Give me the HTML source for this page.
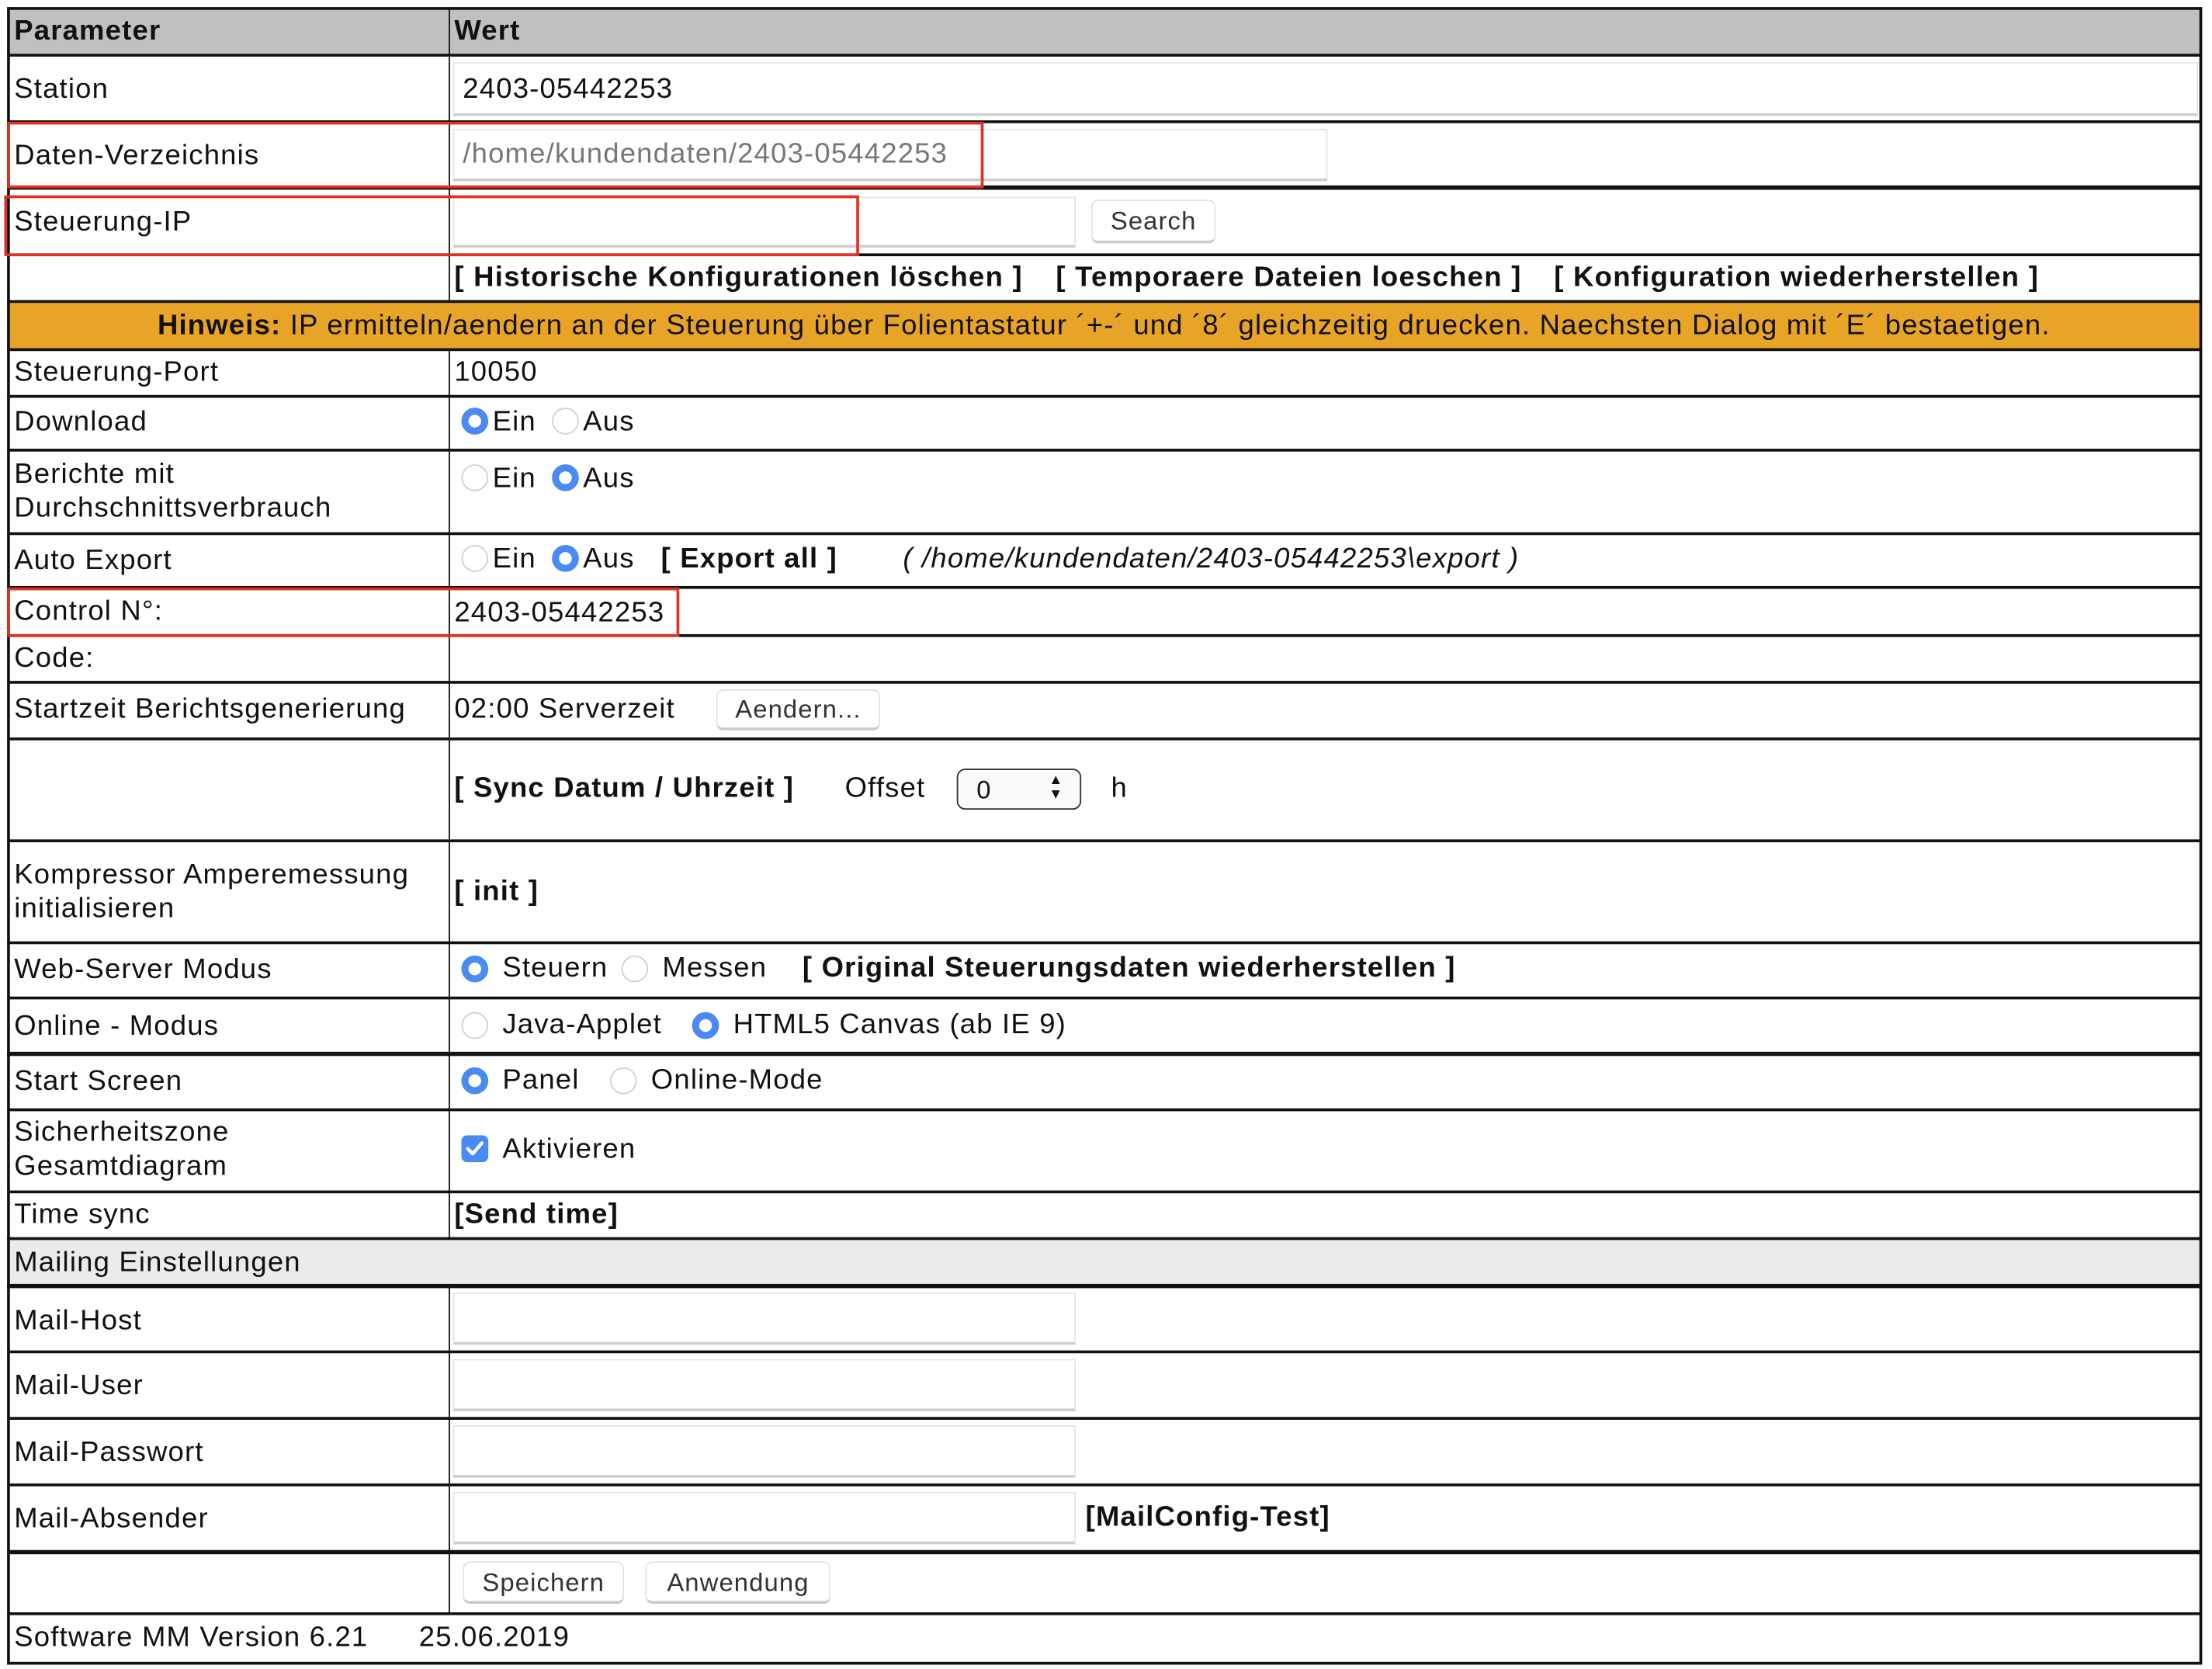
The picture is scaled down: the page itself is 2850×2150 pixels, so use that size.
<!DOCTYPE html>
<html><head><meta charset="utf-8">
<style>
html,body{margin:0;padding:0;background:#fff;width:2850px;height:2150px;overflow:hidden}
#w{position:absolute;left:0;top:0;width:1563px;height:1179px;transform:scale(1.8235);transform-origin:0 0}
.t{position:absolute;font:20px "Liberation Sans",Arial,sans-serif;color:#111;white-space:nowrap;line-height:24px;letter-spacing:0.65px}
.b{font-weight:bold}
.h{position:absolute;background:#111;left:5px;width:1550px}
.v{position:absolute;background:#111;width:1.5px}
.inp{position:absolute;background:#fff;border:1px solid #e6e6e6;border-bottom:2px solid #cfcfcf;box-sizing:border-box}
.btn{position:absolute;background:#fff;border:1px solid #e2e2e2;border-bottom:2px solid #ccc;border-radius:5px;box-sizing:border-box;font:18px "Liberation Sans",Arial,sans-serif;color:#333;text-align:center;letter-spacing:0.6px}
.r{position:absolute;width:19px;height:19px;border-radius:50%;box-sizing:border-box;border:1.5px solid #d0d0d0;background:#fff}
.rs{border:5.5px solid #4a8af4}
.red{position:absolute;border:2.5px solid #e0301e;box-sizing:border-box}
</style></head><body><div id="w">
<div style="position:absolute;left:5px;top:5px;width:1550px;height:34px;background:#c0c0c0"></div>
<div style="position:absolute;left:5px;top:213px;width:1550px;height:34px;background:#e8a427"></div>
<div style="position:absolute;left:5px;top:875px;width:1550px;height:33px;background:#ebebeb"></div>

<div class="h" style="top:5px;height:2px"></div>
<div class="h" style="top:38px;height:2px"></div>
<div class="h" style="top:85px;height:1.5px"></div>
<div class="h" style="top:132px;height:1.5px"></div>
<div style="position:absolute;left:694px;top:131px;width:861px;height:3px;background:#111"></div>
<div class="h" style="top:179px;height:1.5px"></div>
<div class="h" style="top:212px;height:1.5px"></div>
<div class="h" style="top:246px;height:1.5px"></div>
<div class="h" style="top:279px;height:1.5px"></div>
<div class="h" style="top:317px;height:1.5px"></div>
<div class="h" style="top:376px;height:1.5px"></div>
<div class="h" style="top:414px;height:1.5px"></div>
<div class="h" style="top:448px;height:1.5px"></div>
<div class="h" style="top:481px;height:1.5px"></div>
<div class="h" style="top:521px;height:1.5px"></div>
<div class="h" style="top:593px;height:1.5px"></div>
<div class="h" style="top:665px;height:1.5px"></div>
<div class="h" style="top:704px;height:1.5px"></div>
<div class="h" style="top:743px;height:2.5px"></div>
<div class="h" style="top:783px;height:1.5px"></div>
<div class="h" style="top:841px;height:1.5px"></div>
<div class="h" style="top:874px;height:1.5px"></div>
<div class="h" style="top:907px;height:2.5px"></div>
<div class="h" style="top:954px;height:1.5px"></div>
<div class="h" style="top:1001px;height:1.5px"></div>
<div class="h" style="top:1048px;height:1.5px"></div>
<div class="h" style="top:1095px;height:2.5px"></div>
<div class="h" style="top:1139px;height:1.5px"></div>
<div class="h" style="top:1174px;height:1.5px"></div>

<div class="v" style="left:5px;top:5px;height:1171px"></div>
<div class="v" style="left:1554px;top:5px;height:1171px"></div>
<div class="v" style="left:316.5px;top:5px;height:208px"></div>
<div class="v" style="left:316.5px;top:247px;height:628px"></div>
<div class="v" style="left:316.5px;top:908px;height:232px"></div>

<div class="t b" style="left:10px;top:10px">Parameter</div>
<div class="t b" style="left:321px;top:10px">Wert</div>

<div class="t" style="left:10px;top:51px">Station</div>
<div class="t" style="left:10px;top:98px">Daten-Verzeichnis</div>
<div class="t" style="left:10px;top:145px">Steuerung-IP</div>
<div class="t" style="left:10px;top:251px">Steuerung-Port</div>
<div class="t" style="left:10px;top:286px">Download</div>
<div class="t" style="left:10px;top:323px">Berichte mit</div>
<div class="t" style="left:10px;top:347px">Durchschnittsverbrauch</div>
<div class="t" style="left:10px;top:384px">Auto Export</div>
<div class="t" style="left:10px;top:420px">Control N°:</div>
<div class="t" style="left:10px;top:453px">Code:</div>
<div class="t" style="left:10px;top:489px">Startzeit Berichtsgenerierung</div>
<div class="t" style="left:10px;top:606px">Kompressor Amperemessung</div>
<div class="t" style="left:10px;top:630px">initialisieren</div>
<div class="t" style="left:10px;top:673px">Web-Server Modus</div>
<div class="t" style="left:10px;top:713px">Online - Modus</div>
<div class="t" style="left:10px;top:752px">Start Screen</div>
<div class="t" style="left:10px;top:788px">Sicherheitszone</div>
<div class="t" style="left:10px;top:812px">Gesamtdiagram</div>
<div class="t" style="left:10px;top:846px">Time sync</div>
<div class="t" style="left:10px;top:880px">Mailing Einstellungen</div>
<div class="t" style="left:10px;top:921px">Mail-Host</div>
<div class="t" style="left:10px;top:967px">Mail-User</div>
<div class="t" style="left:10px;top:1014px">Mail-Passwort</div>
<div class="t" style="left:10px;top:1061px">Mail-Absender</div>
<div class="t" style="left:10px;top:1145px">Software MM Version 6.21</div>
<div class="t" style="left:296px;top:1145px">25.06.2019</div>

<div class="inp" style="left:320px;top:44px;width:1233px;height:38px"></div>
<div class="t" style="left:327px;top:51px">2403-05442253</div>
<div class="inp" style="left:320px;top:91px;width:618px;height:37px"></div>
<div class="t" style="left:327px;top:97px;color:#777">/home/kundendaten/2403-05442253</div>
<div class="inp" style="left:320px;top:139px;width:440px;height:36px"></div>
<div class="btn" style="left:771px;top:141px;width:88px;height:31px;line-height:29px">Search</div>

<div class="t b" style="left:321px;top:184px;letter-spacing:0.7px">[ Historische Konfigurationen löschen ]</div>
<div class="t b" style="left:746px;top:184px;letter-spacing:0.7px">[ Temporaere Dateien loeschen ]</div>
<div class="t b" style="left:1098px;top:184px;letter-spacing:0.7px">[ Konfiguration wiederherstellen ]</div>
<div class="t" style="left:5px;width:1550px;text-align:center;top:218px"><b>Hinweis:</b> IP ermitteln/aendern an der Steuerung über Folientastatur ´+-´ und ´8´ gleichzeitig druecken. Naechsten Dialog mit ´E´ bestaetigen.</div>

<div class="t" style="left:321px;top:251px">10050</div>

<div class="r rs" style="left:326px;top:288px"></div><div class="t" style="left:348px;top:286px">Ein</div>
<div class="r" style="left:390px;top:288px"></div><div class="t" style="left:412px;top:286px">Aus</div>

<div class="r" style="left:326px;top:328px"></div><div class="t" style="left:348px;top:326px">Ein</div>
<div class="r rs" style="left:390px;top:328px"></div><div class="t" style="left:412px;top:326px">Aus</div>

<div class="r" style="left:326px;top:385px"></div><div class="t" style="left:348px;top:383px">Ein</div>
<div class="r rs" style="left:390px;top:385px"></div><div class="t" style="left:412px;top:383px">Aus</div>
<div class="t b" style="left:467px;top:383px">[ Export all ]</div>
<div class="t" style="left:638px;top:383px;font-style:italic">( /home/kundendaten/2403-05442253\export )</div>

<div class="t" style="left:321px;top:421px">2403-05442253</div>

<div class="t" style="left:321px;top:489px">02:00 Serverzeit</div>
<div class="btn" style="left:506px;top:487px;width:116px;height:29px;line-height:27px">Aendern...</div>

<div class="t b" style="left:321px;top:545px">[ Sync Datum / Uhrzeit ]</div>
<div class="t" style="left:597px;top:545px">Offset</div>
<div style="position:absolute;left:676px;top:543px;width:88px;height:29px;border:1.5px solid #333;border-radius:6px;box-sizing:border-box;background:#fafafa"></div>
<div class="t" style="left:690px;top:546px;font-size:18px">0</div>
<div class="t" style="left:741px;top:547px;font-size:10px;line-height:10px">▲<br>▼</div>
<div class="t" style="left:785px;top:545px">h</div>

<div class="t b" style="left:321px;top:618px">[ init ]</div>

<div class="r rs" style="left:326px;top:675px"></div><div class="t" style="left:355px;top:672px">Steuern</div>
<div class="r" style="left:439px;top:675px"></div><div class="t" style="left:468px;top:672px">Messen</div>
<div class="t b" style="left:567px;top:672px">[ Original Steuerungsdaten wiederherstellen ]</div>

<div class="r" style="left:326px;top:715px"></div><div class="t" style="left:355px;top:712px">Java-Applet</div>
<div class="r rs" style="left:489px;top:715px"></div><div class="t" style="left:518px;top:712px">HTML5 Canvas (ab IE 9)</div>

<div class="r rs" style="left:326px;top:754px"></div><div class="t" style="left:355px;top:751px">Panel</div>
<div class="r" style="left:431px;top:754px"></div><div class="t" style="left:460px;top:751px">Online-Mode</div>

<div style="position:absolute;left:326px;top:802px;width:19px;height:19px;border-radius:4px;background:#4a8af4"></div>
<svg style="position:absolute;left:326px;top:802px" width="19" height="19"><path d="M4.5 9.5 L8 13 L14.5 5.5" stroke="#fff" stroke-width="2.4" fill="none" stroke-linecap="round" stroke-linejoin="round"/></svg>
<div class="t" style="left:355px;top:800px">Aktivieren</div>

<div class="t b" style="left:321px;top:846px">[Send time]</div>

<div class="inp" style="left:320px;top:913px;width:440px;height:37px"></div>
<div class="inp" style="left:320px;top:960px;width:440px;height:37px"></div>
<div class="inp" style="left:320px;top:1007px;width:440px;height:37px"></div>
<div class="inp" style="left:320px;top:1054px;width:440px;height:37px"></div>
<div class="t b" style="left:767px;top:1060px">[MailConfig-Test]</div>

<div class="btn" style="left:327px;top:1103px;width:114px;height:30px;line-height:28px">Speichern</div>
<div class="btn" style="left:456px;top:1103px;width:131px;height:30px;line-height:28px">Anwendung</div>

<div class="red" style="left:5px;top:86px;width:690px;height:47px"></div>
<div class="red" style="left:3px;top:138px;width:604px;height:43px"></div>
<div class="red" style="left:5px;top:415px;width:475px;height:35px"></div>
</div></body></html>
